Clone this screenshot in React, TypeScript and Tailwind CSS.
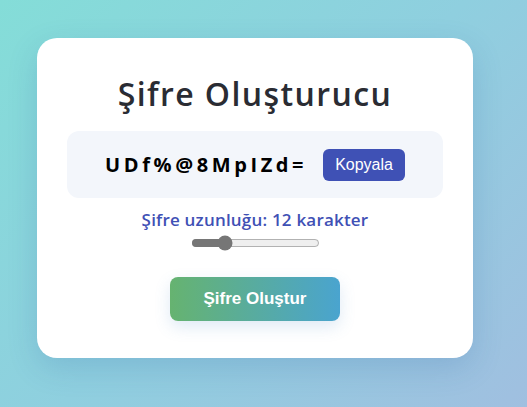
import { useState } from 'react'

const font = { fontFamily: '"Open Sans", "Noto Sans", sans-serif' }

export default function App() {
  const [length, setLength] = useState(12)
  const password = 'UDf%@8MpIZd='

  return (
    <div
      className="min-h-[407px] w-full bg-[linear-gradient(135deg,#84ddd8_0%,#8fcfdf_50%,#a0bfe0_100%)] pl-[37px] pt-[38px] pb-[50px]"
      style={font}
    >
      <div className="flex w-[436px] flex-col items-center rounded-[20px] bg-white px-[30px] pt-[36px] pb-[37px] shadow-[0_10px_30px_rgba(40,90,160,0.18)]">
        <h1 className="text-[32px] font-semibold leading-[40px] tracking-[1.4px] text-[#2a2c33]">
          Şifre Oluşturucu
        </h1>

        <div className="mt-[17px] flex h-[67px] w-full items-center justify-center gap-[16px] rounded-[12px] bg-[#f3f6fb]">
          <span className="text-[20px] font-bold tracking-[3.6px] text-black">
            {password}
          </span>
          <button className="h-[32px] rounded-[6px] bg-[#3f51b5] px-[12px] font-['Liberation_Sans',Arial,sans-serif] text-[16px] text-white">
            Kopyala
          </button>
        </div>

        <label className="mt-[10px] text-[17px] font-semibold leading-[24px] tracking-[0.2px] text-[#3f51b5]">
          Şifre uzunluğu: {length} karakter
        </label>
        <input
          type="range"
          min={6}
          max={32}
          value={length}
          onChange={(e) => setLength(Number(e.target.value))}
          className="mt-[3px] w-[129px] accent-[#767676]"
        />

        <button className="mt-[26px] h-[44px] w-[170px] rounded-[8px] bg-[linear-gradient(90deg,#66b370,#4aa4cf)] font-['Liberation_Sans',Arial,sans-serif] text-[17px] font-bold text-white shadow-[0_6px_16px_rgba(80,140,200,0.18)]">
          Şifre Oluştur
        </button>
      </div>
    </div>
  )
}
